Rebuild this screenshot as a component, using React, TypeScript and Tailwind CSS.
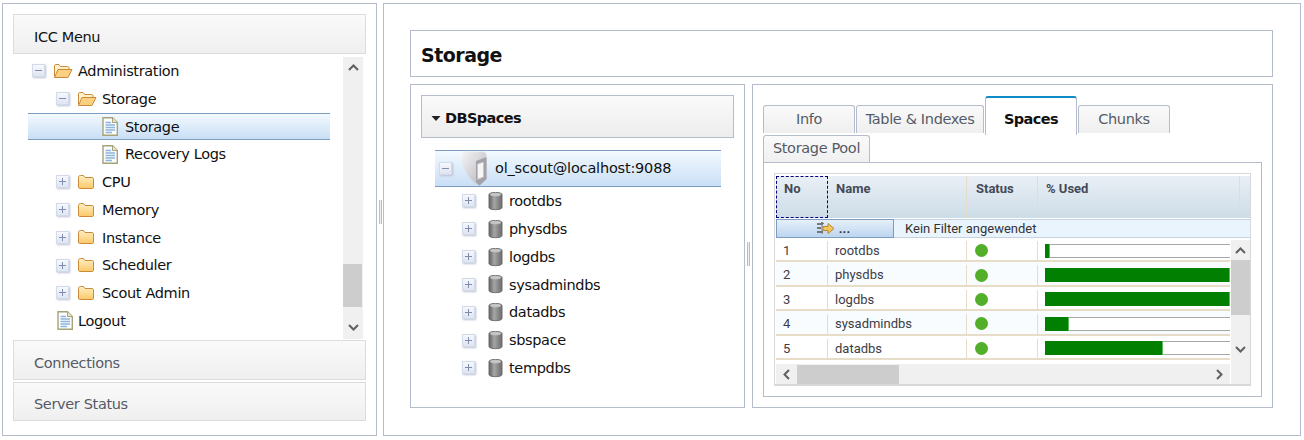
import React from "react";

const Expander = ({ open = false }: { open?: boolean }) => (
  <span className="-ml-px flex h-[13px] w-[13px] shrink-0 items-center justify-center border border-[#d3daea] bg-gradient-to-b from-[#f6f8fc] to-[#dfe5f1] shadow-[1px_1px_2px_#b9c1d2]">
    <svg width="9" height="9" viewBox="0 0 9 9">
      <path d="M1 4.5H8" stroke="#7f8db0" strokeWidth="1" />
      {!open && <path d="M4.5 1V8" stroke="#7f8db0" strokeWidth="1" />}
    </svg>
  </span>
);

const FolderClosed = () => (
  <svg width="18" height="16" viewBox="0 0 18 16" className="shrink-0">
    <defs>
      <linearGradient id="fc" x1="0" y1="0" x2="0" y2="1">
        <stop offset="0" stopColor="#fff0c4" />
        <stop offset="1" stopColor="#fbc868" />
      </linearGradient>
    </defs>
    <path d="M1.5 3.5C1.5 2.2 2.2 1.5 3.5 1.5H6.5L8 3.5H15C16 3.5 16.5 4 16.5 5V13C16.5 14 16 14.5 15 14.5H3C2 14.5 1.5 14 1.5 13Z" fill="url(#fc)" stroke="#c98b3a" />
  </svg>
);

const FolderOpen = () => (
  <svg width="20" height="16" viewBox="0 0 20 16" className="shrink-0">
    <path d="M1.5 13.5V3C1.5 2 2 1.5 3 1.5H6L7.5 3.5H14.5C15.5 3.5 16 4 16 5V6.5" fill="#fff0c8" stroke="#c98b3a" />
    <path d="M1.5 14.5L5 6.5H19L15 14.5Z" fill="#fcd080" stroke="#c98b3a" strokeLinejoin="round" />
  </svg>
);

const Page = () => (
  <svg width="16" height="19" viewBox="0 0 16 19" className="shrink-0">
    <path d="M1 .7H10.5L15.3 5.5V18.3H1Z" fill="#fbfdfe" stroke="#a6a27a" strokeWidth="1.4" />
    <path d="M10.5 .7V5.5H15.3" fill="#e8e6d0" stroke="#a6a27a" />
    <path d="M3.5 5.5H9M3.5 8H13M3.5 10.5H13M3.5 13H13M3.5 15.5H10" stroke="#8db4dc" strokeWidth="1.3" />
  </svg>
);

const Cylinder = () => (
  <svg width="15" height="20" viewBox="0 0 15 20" className="shrink-0">
    <defs>
      <linearGradient id="cy" x1="0" y1="0" x2="1" y2="0">
        <stop offset="0" stopColor="#5f5f5f" />
        <stop offset=".4" stopColor="#a6a6a6" />
        <stop offset="1" stopColor="#6c6c6c" />
      </linearGradient>
    </defs>
    <path d="M1 3.5C1 .8 14 .8 14 3.5V16.5C14 19.4 1 19.4 1 16.5Z" fill="url(#cy)" stroke="#6e6e6e" />
    <ellipse cx="7.5" cy="3.5" rx="5.5" ry="1.8" fill="#c4c4c4" />
  </svg>
);

const Server = () => (
  <svg width="26" height="35" viewBox="0 0 26 35" className="shrink-0">
    <defs>
      <linearGradient id="sv" x1="0" y1="0" x2="1" y2="1">
        <stop offset="0" stopColor="#f4f4f6" />
        <stop offset="1" stopColor="#b4b4ba" />
      </linearGradient>
    </defs>
    <path d="M1 4C1 2 3 .8 6 .8H21C24 .8 25.5 2 25.5 5V28L18.5 34.5C12 32 2.5 22 1 9Z" fill="url(#sv)" />
    <path d="M15 10L25.5 6V28L18.5 34.5L15 31Z" fill="#a2a2a8" />
    <path d="M16.5 13L22.5 11V26L16.5 28.5Z" fill="#f6f6f6" stroke="#c4c4c8" />
  </svg>
);

const ChevronUp = () => (
  <svg width="11" height="7" viewBox="0 0 11 7"><path d="M1 6L5.5 1.5L10 6" fill="none" stroke="#606060" strokeWidth="2" /></svg>
);
const ChevronDown = () => (
  <svg width="11" height="7" viewBox="0 0 11 7"><path d="M1 1L5.5 5.5L10 1" fill="none" stroke="#606060" strokeWidth="2" /></svg>
);
const ChevronLeft = () => (
  <svg width="7" height="11" viewBox="0 0 7 11"><path d="M6 1L1.5 5.5L6 10" fill="none" stroke="#606060" strokeWidth="2" /></svg>
);
const ChevronRight = () => (
  <svg width="7" height="11" viewBox="0 0 7 11"><path d="M1 1L5.5 5.5L1 10" fill="none" stroke="#606060" strokeWidth="2" /></svg>
);

const Grip = ({ className }: { className: string }) => (
  <div className={`w-[3px] shrink-0 border-x border-[#b5bccb] bg-[#f0f0f0] ${className}`} />
);

const AccHeader = ({ label, active = false, h = "h-10" }: { label: string; active?: boolean; h?: string }) => (
  <div
    className={`flex items-center border border-[#dcdcdc] bg-gradient-to-b from-[#fafafa] to-[#efefef] pl-5 pt-[7px] text-[14.5px] ${h} ${
      active ? "text-[#111]" : "text-[#555b66]"
    }`}
  >
    {label}
  </div>
);

type Item = { label: string; level: 0 | 1 | 2; kind: "open" | "closed" | "page"; selected?: boolean };
const menu: Item[] = [
  { label: "Administration", level: 0, kind: "open" },
  { label: "Storage", level: 1, kind: "open" },
  { label: "Storage", level: 2, kind: "page", selected: true },
  { label: "Recovery Logs", level: 2, kind: "page" },
  { label: "CPU", level: 1, kind: "closed" },
  { label: "Memory", level: 1, kind: "closed" },
  { label: "Instance", level: 1, kind: "closed" },
  { label: "Scheduler", level: 1, kind: "closed" },
  { label: "Scout Admin", level: 1, kind: "closed" },
];

const MenuRow = ({ item }: { item: Item }) => {
  const selected = item.selected;
  return (
    <div
      className={`flex h-[27.75px] items-center ${
        selected ? "border-y border-[#7c9cc0] bg-gradient-to-b from-[#f3f9fe] to-[#c9dff6]" : ""
      } ${item.level === 0 ? "pl-[5px]" : item.level === 1 ? "pl-[29px]" : "pl-[74px]"}`}
    >
      {item.kind === "page" ? (
        <span className="flex w-[23px] shrink-0"><Page /></span>
      ) : (
        <>
          <Expander open={item.kind === "open"} />
          <span className="ml-[8px] flex w-[25px] shrink-0">{item.kind === "open" ? <FolderOpen /> : <FolderClosed />}</span>
        </>
      )}
      <span className="whitespace-nowrap pt-[2px] text-[14.5px] text-[#111]">{item.label}</span>
    </div>
  );
};

const spaces = ["rootdbs", "physdbs", "logdbs", "sysadmindbs", "datadbs", "sbspace", "tempdbs"];

const rows = [
  { no: 1, name: "rootdbs", pct: 2.5 },
  { no: 2, name: "physdbs", pct: 100 },
  { no: 3, name: "logdbs", pct: 100 },
  { no: 4, name: "sysadmindbs", pct: 13 },
  { no: 5, name: "datadbs", pct: 64 },
];

const Tab = ({ label, w, active = false }: { label: string; w: string; active?: boolean }) =>
  active ? (
    <div className={`flex h-[39px] items-center justify-center self-start rounded-t-[3px] border border-b-0 border-[#b5bccb] border-t-2 border-t-[#0f8bc6] bg-white pt-[6px] text-[14.5px] font-bold tracking-[-0.6px] text-[#111] ${w}`}>
      {label}
    </div>
  ) : (
    <div className={`mt-[9px] flex h-[28px] items-center justify-center self-start rounded-t-[3px] border border-b-0 border-[#b5bccb] bg-gradient-to-b from-[#fafafa] to-[#efefef] text-[14.5px] text-[#555b66] ${w}`}>
      {label}
    </div>
  );

export default function App() {
  return (
    <div className="flex h-[440px] w-[1304px] overflow-hidden bg-white pl-[2px] pt-[3px] pb-[4px] pr-[3px] font-['DejaVu_Sans',sans-serif] tracking-[-0.35px]">
      {/* left panel */}
      <div className="flex w-[375px] shrink-0 flex-col border border-[#b5bccb] px-[10px] pt-[10px]">
        <AccHeader label="ICC Menu" active />
        <div className="flex h-[285px] pl-[15px] pr-[3px]">
          <div className="flex-1 pt-[3px]">
            <div className="w-[302px]">
              {menu.map((m, i) => (
                <MenuRow key={i} item={m} />
              ))}
              <div className="flex h-[27.75px] items-center pl-[29px]">
                <span className="flex w-[21px] shrink-0"><Page /></span>
                <span className="whitespace-nowrap pt-[2px] text-[14.5px] text-[#111]">Logout</span>
              </div>
            </div>
          </div>
          <div className="mt-[3px] flex w-[20px] shrink-0 flex-col bg-[#f0f0f0]">
            <div className="flex h-[20px] items-center justify-center"><ChevronUp /></div>
            <div className="h-[187px]" />
            <div className="h-[43px] w-[19px] bg-[#cdcdcd]" />
            <div className="flex flex-1 items-center justify-center pt-[8px]"><ChevronDown /></div>
          </div>
        </div>
        <div className="mt-[1px]"><AccHeader label="Connections" /></div>
        <div className="mt-[2px]"><AccHeader label="Server Status" h="h-[39px]" /></div>
      </div>

      <div className="flex w-[6px] shrink-0 items-center justify-center">
        <Grip className="mb-[16px] h-[24px]" />
      </div>

      {/* right panel */}
      <div className="flex flex-1 flex-col border border-[#b5bccb] pl-[26px] pr-[27px] pt-[26px]">
        <div className="flex h-[47px] items-center border border-[#b5bccb] pl-[10px] pt-[3px] text-[19px] font-bold tracking-[-0.5px] text-[#111]">Storage</div>
        <div className="mt-[7px] flex h-[324px]">
          {/* DBSpaces */}
          <div className="w-[335px] shrink-0 border border-[#b5bccb] px-[10px] pt-[10px]">
            <div className="flex h-[43px] items-center border border-[#b5bccb] bg-gradient-to-b from-[#fafafa] to-[#ededed] pl-[9px] pt-[4px] text-[14.5px] font-bold tracking-[-0.6px] text-[#111]">
              <svg width="10" height="5" viewBox="0 0 10 5" className="mr-[4px]"><path d="M0.5 0H9.5L5 5Z" fill="#222" /></svg>
              DBSpaces
            </div>
            <div className="mt-[12px] ml-[14px] mr-[13px]">
              <div className="flex h-[37px] items-center border-y border-[#7c9cc0] bg-gradient-to-b from-[#f3f9fe] to-[#c9dff6] pl-[5px]">
                <Expander open />
                <span className="ml-[9px] flex w-[34px] shrink-0"><Server /></span>
                <span className="whitespace-nowrap text-[14.5px] tracking-[-0.2px] text-[#111]">ol_scout@localhost:9088</span>
              </div>
              {spaces.map((s) => (
                <div key={s} className="flex h-[27.85px] items-center pl-[28px]">
                  <Expander />
                  <span className="ml-[13px] flex w-[21px] shrink-0"><Cylinder /></span>
                  <span className="whitespace-nowrap pt-[2px] text-[14.5px] text-[#111]">{s}</span>
                </div>
              ))}
            </div>
          </div>

          <div className="flex w-[7px] shrink-0 justify-center pt-[158px]">
            <Grip className="h-[24px]" />
          </div>

          {/* Tabs panel */}
          <div className="flex-1 border border-[#b5bccb] px-[10px] pt-[11px]">
            <div className="flex h-[39px] gap-[1px]">
              <Tab label="Info" w="w-[92px]" />
              <Tab label="Table &amp; Indexes" w="w-[128px]" />
              <Tab label="Spaces" w="w-[92px]" active />
              <Tab label="Chunks" w="w-[92px]" />
            </div>
            <div className="flex h-[27px]">
              <div className="flex w-[107px] items-center justify-center rounded-t-[3px] border border-b-0 border-[#b5bccb] bg-gradient-to-b from-[#fafafa] to-[#f0f0f0] text-[14.5px] text-[#555b66]">
                Storage Pool
              </div>
            </div>
            <div className="h-[235px] border border-[#b5bccb] px-[10px] pt-[10px]">
              <div className="flex h-[213px] flex-col border border-[#d8d8d8] border-b-2 pl-[1px] pt-[2px] font-['Roboto',sans-serif] tracking-normal">
                <div className="flex h-[42px] shrink-0 overflow-hidden bg-gradient-to-b from-[#eaeff6] to-[#ccdde7] text-[13px] font-bold text-[#444a57]">
                  <div className="w-[52px] shrink-0 border border-dashed border-[#000080] pl-[7px] pt-[2px]">No</div>
                  <div className="w-[139px] shrink-0 border-r border-[#e6dcc8] pl-[8px] pt-[3px]">Name</div>
                  <div className="w-[71px] shrink-0 border-r border-[#e6dcc8] pl-[9px] pt-[3px]">Status</div>
                  <div className="w-[202px] shrink-0 border-r border-[#e6dcc8] pl-[8px] pt-[3px]">% Used</div>
                </div>
                <div className="mt-[1px] flex h-[19px] shrink-0 items-center border-y border-[#c6d2de] bg-[#eaf4fd] text-[13px] text-[#333]">
                  <div className="flex h-[19px] w-[118px] shrink-0 items-center justify-center border border-[#7c9cc0] bg-gradient-to-b from-[#e6f0fa] to-[#bcd5ef] font-bold">
                    <svg width="19" height="15" viewBox="0 0 19 15" className="mr-[4px] -ml-[4px]">
                      <path d="M1 3H7M1 7H5M1 11H7" stroke="#555" strokeWidth="1.4" />
                      <path d="M6 1.5V13M4 3L6 1L8 3" stroke="#777" fill="none" />
                      <path d="M7 5.5H12V2.5L18 7.5L12 12.5V9.5H7Z" fill="#f6c55e" stroke="#b98a2d" />
                    </svg>
                    ...
                  </div>
                  <span className="ml-[11px]">Kein Filter angewendet</span>
                </div>
                <div className="flex min-h-0 flex-1">
                  <div className="flex w-[454px] shrink-0 flex-col">
                    <div className="flex-1 overflow-hidden">
                      {rows.map((r) => (
                        <div
                          key={r.no}
                          className={`flex h-[24.4px] border-b-2 border-[#e6dcc8] pt-[3px] text-[13px] text-[#3c3c46] ${
                            r.no % 2 === 0 ? "bg-[#f8fcff]" : "bg-white"
                          }`}
                        >
                          <div className="flex w-[52px] shrink-0 items-center border-r border-[#e6dcc8] pl-[7px]">{r.no}</div>
                          <div className="flex w-[139px] shrink-0 items-center border-r border-[#e6dcc8] pl-[7px]">{r.name}</div>
                          <div className="flex w-[71px] shrink-0 items-center border-r border-[#e6dcc8] pl-[8px]">
                            <span className="h-[13px] w-[13px] rounded-full bg-[#53ae2a]" />
                          </div>
                          <div className="flex flex-1 items-center pl-[7px]">
                            <div className="h-[14px] flex-1 border-y border-[#a8a8a8] bg-white">
                              <div className="-my-px h-[14px] border-r border-[#5cb85c] bg-[#007f00]" style={{ width: `${r.pct}%` }} />
                            </div>
                          </div>
                        </div>
                      ))}
                    </div>
                    <div className="flex h-[20px] shrink-0 items-center bg-[#f0f0f0]">
                      <div className="flex h-[20px] w-[21px] shrink-0 items-center justify-center"><ChevronLeft /></div>
                      <div className="h-[19px] w-[102px] bg-[#cdcdcd]" />
                      <div className="flex flex-1 items-center justify-end pr-[7px]"><ChevronRight /></div>
                    </div>
                  </div>
                  <div className="ml-px mt-[2px] flex w-[19px] shrink-0 flex-col bg-[#f0f0f0]">
                    <div className="flex h-[20px] items-center justify-center"><ChevronUp /></div>
                    <div className="h-[55px] bg-[#cdcdcd]" />
                    <div className="flex flex-1 items-center justify-center"><ChevronDown /></div>
                  </div>
                </div>
              </div>
            </div>
          </div>
        </div>
      </div>
    </div>
  );
}
